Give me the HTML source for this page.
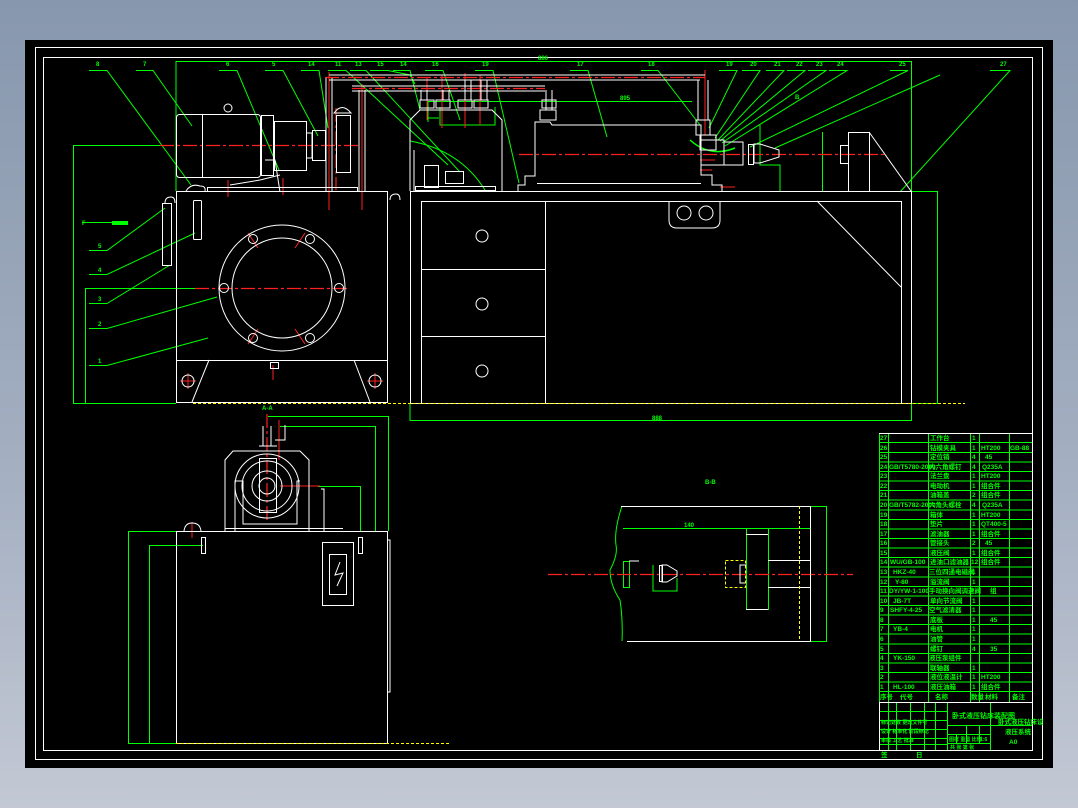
<!DOCTYPE html>
<html><head><meta charset="utf-8"><style>
html,body{margin:0;padding:0;width:1078px;height:808px;overflow:hidden;background:linear-gradient(180deg,#8797ad 0%,#a5b0c2 60%,#c3c8d4 100%);}
svg{position:absolute;left:0;top:0}
text{font-family:"Liberation Sans","Noto Sans CJK SC",sans-serif;font-weight:bold}
</style></head><body>
<svg width="1078" height="808" viewBox="0 0 1078 808" xmlns="http://www.w3.org/2000/svg">
<rect x="25" y="40" width="1028" height="728" fill="#000"/>
<g fill="none" stroke="#fff" stroke-width="1">
<rect x="35.5" y="47.5" width="1007" height="712"/>
<rect x="43.5" y="57.5" width="989" height="693"/>
</g>
<!-- dimension lines -->
<g fill="none" stroke="#00ff00" stroke-width="1">
<polyline points="176,191 176,61.5 911.5,61.5 911.5,420.5 410,420.5 410,403"/>
<polyline points="170,145.5 73.5,145.5 73.5,403.5 176,403.5"/>
<polyline points="201,288.5 85.5,288.5 85.5,403"/>
<polyline points="911,191.5 937.5,191.5 937.5,403.5 911,403.5"/>
<polyline points="822.5,132 822.5,191"/>
<polyline points="760,125 760,165 780,165 780,191"/>
<line x1="428" y1="101.5" x2="692" y2="101.5"/>
<line x1="428" y1="101" x2="428" y2="122"/>
<!-- leaders -->
<polyline points="89,70.5 107,70.5 191,185"/>
<polyline points="136,70.5 153,70.5 192,126"/>
<polyline points="219,70.5 237,70.5 279,170"/>
<polyline points="265,70.5 283,70.5 318,136"/>
<polyline points="301,70.5 319,70.5 328,128"/>
<polyline points="328,70.5 346,70.5 448,165"/>
<polyline points="350,70.5 366,70.5 460,172"/>
<polyline points="370,70.5 388,70.5 410,75 415,84"/>
<polyline points="393,70.5 410,70.5 420,110"/>
<polyline points="425,70.5 443,70.5 460,120"/>
<polyline points="475,70.5 493,70.5 519,183"/>
<polyline points="570,70.5 588,70.5 607,137"/>
<polyline points="641,70.5 658,70.5 700,125"/>
<polyline points="719,70.5 737,70.5 709,128"/>
<polyline points="742,70.5 760,70.5 715,138"/>
<polyline points="766,70.5 784,70.5 718,140"/>
<polyline points="787,70.5 805,70.5 720,141"/>
<polyline points="808,70.5 826,70.5 722,143"/>
<polyline points="829,70.5 847,70.5 725,146"/>
<polyline points="890,70.5 908,70.5 750,147"/>
<polyline points="940,75 775,148"/>
<polyline points="990,70.5 1010,70.5 900,192"/>
<polyline points="89,250.5 107,250.5 165,208"/>
<polyline points="89,274.5 107,274.5 195,233"/>
<polyline points="89,303.5 107,303.5 170,265"/>
<polyline points="89,328.5 107,328.5 217,297"/>
<polyline points="89,365.5 107,365.5 208,338"/>
<polyline points="82,222.5 128,222.5"/>
<path d="M410,141 Q460,150 485,190"/>
<polyline points="427,107 427,118 439,118"/>
<polyline points="440,107 440,125 495,125 495,107"/>
<path d="M690,140 Q710,158 735,148" stroke-width="1.5"/>
<!-- bottom-left dims -->
<polyline points="176,531.5 128.5,531.5 128.5,743.5 176,743.5"/>
<polyline points="203,545.5 149.5,545.5 149.5,743"/>
<polyline points="268,416.5 388.5,416.5 388.5,531"/>
<polyline points="280,426.5 375.5,426.5 375.5,531"/>
<polyline points="318,486.5 360.5,486.5 360.5,531"/>
<!-- B-B dims -->
<polyline points="623,528.5 810,528.5"/>
<polyline points="810,506.5 826.5,506.5 826.5,641.5 810,641.5"/>
<rect x="746.5" y="528.5" width="22" height="81"/>
<rect x="623.5" y="561.5" width="6" height="26"/>
<polyline points="653,565 653,591 677,591 677,578"/>
<path d="M622,506 Q614,530 616,545 Q618,555 610,570 Q610,585 620,600 Q623,620 622,641"/>
</g>
<g fill="#00ff00" font-size="6">
<text x="96" y="66">8</text><text x="143" y="66">7</text><text x="226" y="66">6</text><text x="272" y="66">5</text><text x="308" y="66">14</text><text x="335" y="66">11</text><text x="355" y="66">13</text><text x="377" y="66">15</text><text x="400" y="66">14</text><text x="432" y="66">16</text><text x="482" y="66">19</text><text x="577" y="66">17</text><text x="648" y="66">18</text><text x="726" y="66">19</text><text x="750" y="66">20</text><text x="774" y="66">21</text><text x="796" y="66">22</text><text x="816" y="66">23</text><text x="837" y="66">24</text><text x="899" y="66">25</text><text x="1000" y="66">27</text>
<text x="538" y="60">886</text><text x="620" y="100">895</text><text x="652" y="420">888</text>
<text x="98" y="248">5</text><text x="98" y="272">4</text><text x="98" y="301">3</text><text x="98" y="326">2</text><text x="98" y="363">1</text>
<text x="82" y="225">F</text><text x="795" y="99">B</text>
<text x="705" y="484">B-B</text><text x="262" y="410">A-A</text>
<text x="684" y="527">140</text>
<rect x="112" y="221" width="16" height="4"/>
</g>
<!-- red center lines -->
<g stroke="#ff2020" stroke-width="1.2" fill="none" stroke-dasharray="14,3,3,3">
<line x1="160" y1="145.5" x2="360" y2="145.5"/>
<line x1="195" y1="288.5" x2="350" y2="288.5"/>
<line x1="519" y1="154.5" x2="885" y2="154.5"/>
<line x1="548" y1="574.5" x2="853" y2="574.5"/>
<line x1="325" y1="77.5" x2="705" y2="77.5"/>
<line x1="352" y1="88.5" x2="545" y2="88.5"/>
<line x1="267" y1="414" x2="267" y2="520"/>
<line x1="336" y1="108" x2="336" y2="190"/>
</g>
<g stroke="#ff2020" stroke-width="1" fill="none">
<line x1="329" y1="72" x2="329" y2="210"/><line x1="362" y1="84" x2="362" y2="210"/>
<line x1="228" y1="180" x2="228" y2="197"/><line x1="283" y1="178" x2="283" y2="195"/>
<line x1="427" y1="78" x2="427" y2="120"/><line x1="442" y1="75" x2="442" y2="128"/><line x1="465" y1="73" x2="465" y2="128"/><line x1="480" y1="75" x2="480" y2="125"/>
<line x1="705" y1="70" x2="705" y2="135"/>
<path d="M180,381h16M188,373v16M367,381h16M375,373v16M273,365v15"/>
<path d="M248,233l10,15M305,233l-10,15M248,344l10,-15M305,344l-10,-15"/>
<line x1="280" y1="486" x2="320" y2="486"/><line x1="279" y1="420" x2="279" y2="460"/><line x1="192" y1="522" x2="192" y2="538"/>
<path d="M700,160l15,0M700,170l12,0M735,187l-15,0"/>
</g>
<!-- white geometry -->
<g fill="none" stroke="#fff" stroke-width="1">
<!-- motor/pump -->
<rect x="176.5" y="114.5" width="84" height="63" rx="3"/>
<line x1="202.5" y1="114" x2="202.5" y2="177"/>
<circle cx="228" cy="108" r="4"/>
<rect x="261.5" y="115.5" width="12" height="60"/>
<rect x="274.5" y="121.5" width="32" height="49"/>
<polyline points="306,133 312,133 312,158 306,158"/>
<rect x="312.5" y="130.5" width="13" height="30"/>
<rect x="336.5" y="115.5" width="14" height="57"/>
<path d="M334,113 Q342,102 351,113 Z"/>
<polyline points="265,160 275,160 280,192"/>
<path d="M230,185 L260,180 L280,175"/>
<path d="M186,191 Q191,183 200,186 Q206,186 205,191"/>
<rect x="207.5" y="187.5" width="150" height="4"/>
<!-- tank -->
<rect x="176.5" y="191.5" width="211" height="211"/>
<line x1="176" y1="360.5" x2="388" y2="360.5"/>
<line x1="209" y1="360" x2="192" y2="402"/><line x1="354" y1="360" x2="370" y2="402"/>
<circle cx="188" cy="381" r="6"/><circle cx="375" cy="381" r="6"/>
<circle cx="282" cy="288" r="63"/><circle cx="282" cy="288" r="50"/>
<circle cx="253" cy="239" r="4.5"/><circle cx="310" cy="239" r="4.5"/><circle cx="224" cy="288" r="4.5"/><circle cx="339" cy="288" r="4.5"/><circle cx="253" cy="338" r="4.5"/><circle cx="310" cy="338" r="4.5"/>
<rect x="193.5" y="200.5" width="8" height="39" rx="1"/>
<rect x="162.5" y="203.5" width="9" height="62"/>
<path d="M165,203 q0,-6 6,-6 q4,0 4,6M390,200 q0,-6 6,-6 q4,0 4,6"/>
<rect x="270.5" y="362.5" width="8" height="6"/>
<!-- pipes -->
<path d="M329,75 H705 M329,80 H700 M352,86 H545 M352,91 H545"/>
<path d="M326,78 V191 M332,78 V191 M359,90 V191 M365,90 V191"/>
<path d="M420,100 h14 v8 h-14z M436,100 h14 v8 h-14z M458,100 h14 v8 h-14z M474,100 h14 v8 h-14z M542,100 h14 v8 h-14z"/>
<path d="M421,90 v10 M427,90 v10 M443,90 v10 M449,90 v10 M465,80 v20 M471,80 v20 M481,80 v20 M487,80 v20 M546,90 v20 M552,90 v20"/>
<path d="M698,80 v40 M708,80 v40 M696,120 h14 v15 h-14z M700,135 h16 v15 h-16z"/>
<path d="M540,110 h16 v10 h-16z"/>
<!-- valve housing -->
<polyline points="410,191 410,120 420,110 492,110 502,120 502,191"/>
<line x1="414" y1="150" x2="414" y2="191"/>
<rect x="424.5" y="165.5" width="14" height="22"/>
<rect x="445.5" y="171.5" width="18" height="12"/>
<rect x="415.5" y="186.5" width="80" height="4"/>
<!-- cylinder -->
<polyline points="518,191 518,185 525,185 525,176 535,176 535,122 550,122 552,125 701,125 701,175 712,175 712,185 722,185 722,191"/>
<line x1="537" y1="183.5" x2="701" y2="183.5"/>
<polyline points="701,140 724,140 724,165 701,165"/>
<polyline points="724,142 743,142 743,165 724,165"/>
<rect x="748.5" y="144.5" width="5" height="20"/>
<polygon points="754,144 760,144 779,150 779,157 760,163 754,163"/>
<!-- tailstock -->
<rect x="848.5" y="132.5" width="21" height="59"/>
<rect x="840.5" y="145.5" width="8" height="18"/>
<line x1="869" y1="132" x2="911" y2="191"/>
<!-- bench -->
<rect x="410.5" y="191.5" width="501" height="212"/>
<polyline points="421.5,403 421.5,201.5 901.5,201.5 901.5,403"/>
<line x1="545.5" y1="201" x2="545.5" y2="403"/>
<line x1="421" y1="269.5" x2="545" y2="269.5"/><line x1="421" y1="336.5" x2="545" y2="336.5"/>
<circle cx="482" cy="236" r="6"/><circle cx="482" cy="304" r="6"/><circle cx="482" cy="371" r="6"/>
<path d="M669,201 V220 Q669,228 677,228 H712 Q720,228 720,220 V201"/>
<circle cx="684" cy="213" r="7"/><circle cx="706" cy="213" r="7"/>
<line x1="817" y1="201" x2="901" y2="287"/>
<!-- A view -->
<rect x="176.5" y="531.5" width="211" height="212"/>
<polyline points="225,531 225,460 233,451 300,451 309,460 309,531"/>
<circle cx="267" cy="486" r="32"/><circle cx="267" cy="486" r="25"/><circle cx="267" cy="486" r="15"/><circle cx="267" cy="486" r="8"/>
<rect x="259.5" y="458.5" width="17" height="54"/>
<polyline points="235,531 235,481 243,481 243,524 297,524 297,481 300,481"/>
<line x1="225" y1="528.5" x2="343" y2="528.5"/>
<polyline points="321,489 324,489 324,531"/>
<path d="M184,531 Q185,523 192,523 Q200,523 201,531"/>
<path d="M259,446 h18 M263,446 v-20 M271,446 v-20 M275,440 h10 v-15"/>
<rect x="201.5" y="537.5" width="4" height="16"/><rect x="358.5" y="537.5" width="4" height="16"/>
<rect x="322.5" y="542.5" width="31" height="63"/><rect x="329.5" y="554.5" width="17" height="40"/>
<polyline points="340,562 335,575 343,573 337,586"/>
<polyline points="388,540 390,540 390,692 388,692"/>
<!-- B-B -->
<polyline points="621,506.5 810.5,506.5 810.5,641.5 627,641.5"/>
<line x1="746" y1="534.5" x2="768" y2="534.5"/>
<line x1="746" y1="609.5" x2="768" y2="609.5"/>
<polyline points="768,560.5 810,560.5 M768,587.5 810,587.5"/>
<line x1="768" y1="560.5" x2="810" y2="560.5"/><line x1="768" y1="587.5" x2="810" y2="587.5"/>
<polyline points="629,561 639,561 M640,562 652,562 652,586 640,586 M629,586 639,586"/>
<rect x="659.5" y="565.5" width="3" height="16"/>
<polygon points="662,565 667,565 677,571 677,576 667,582 662,582"/>
<polyline points="746,565 740,565 740,583 746,583"/>
</g>
<g fill="none" stroke="#ffff00" stroke-width="1" stroke-dasharray="3,2">
<line x1="193" y1="403.5" x2="965" y2="403.5"/>
<line x1="176" y1="743.5" x2="450" y2="743.5"/>
<line x1="799.5" y1="506" x2="799.5" y2="641"/>
<rect x="725.5" y="560.5" width="20" height="27"/>
</g>
<line x1="43" y1="750.5" x2="1032" y2="750.5" stroke="#fff"/>
<!-- title block -->
<g stroke="#00ff00" stroke-width="1" fill="none">
<path d="M879.5,433 V750 M888.5,433 V702 M928.5,433 V702 M970.5,433 V702 M979.5,433 V702 M1009.5,433 V702"/>
<path d="M879,442.5H1032M879,452.5H1032M879,462H1032M879,471.5H1032M879,481H1032M879,490.5H1032M879,500H1032M879,510H1032M879,519.5H1032M879,529H1032M879,538.5H1032M879,548H1032M879,557.5H1032M879,567H1032M879,577H1032M879,586.5H1032M879,596H1032M879,605.5H1032M879,615H1032M879,624.5H1032M879,634H1032M879,644H1032M879,653.5H1032M879,663H1032M879,672.5H1032M879,682H1032M879,691.5H1032"/>
<path d="M888.5,702 V750 M896.5,702V750 M910.5,702V750 M924.5,702V750 M935.5,702V750 M947.5,702V750 M990.5,702V750 M879,711.5H947 M879,720.5H947 M879,729.5H947 M879,738.5H947 M879,744.5H947 M947,725.5H1032 M947,734.5H990 M947,743.5H990 M956.5,734V743 M966.5,725V743 M979.5,725V743"/>
</g>
<g stroke="#fff" fill="none"><path d="M879,433.5H1032 M879,702.5H1032 M1032.5,433V750 M879.5,702V750"/></g>
<g fill="#00ff00" font-size="6.5">
<text x="880" y="440">27</text><text x="930" y="440">工作台</text><text x="972" y="440">1</text>
<text x="880" y="450">26</text><text x="930" y="450">钻模夹具</text><text x="972" y="450">1</text><text x="981" y="450">HT200</text><text x="1010" y="450">GB-88</text>
<text x="880" y="459">25</text><text x="930" y="459">定位销</text><text x="972" y="459">4</text><text x="985" y="459">45</text>
<text x="880" y="469">24</text><text x="889" y="469">GB/T5780-2000</text><text x="929" y="469">内六角螺钉</text><text x="972" y="469">4</text><text x="982" y="469">Q235A</text>
<text x="880" y="478">23</text><text x="930" y="478">法兰盘</text><text x="972" y="478">1</text><text x="981" y="478">HT200</text>
<text x="880" y="488">22</text><text x="930" y="488">电动机</text><text x="972" y="488">1</text><text x="981" y="488">组合件</text>
<text x="880" y="497">21</text><text x="930" y="497">油箱盖</text><text x="972" y="497">2</text><text x="981" y="497">组合件</text>
<text x="880" y="507">20</text><text x="889" y="507">GB/T5782-2000</text><text x="929" y="507">六角头螺栓</text><text x="972" y="507">4</text><text x="982" y="507">Q235A</text>
<text x="880" y="517">19</text><text x="930" y="517">箱体</text><text x="972" y="517">1</text><text x="981" y="517">HT200</text>
<text x="880" y="526">18</text><text x="930" y="526">垫片</text><text x="972" y="526">1</text><text x="981" y="526">QT400-5</text>
<text x="880" y="536">17</text><text x="930" y="536">滤油器</text><text x="972" y="536">1</text><text x="981" y="536">组合件</text>
<text x="880" y="545">16</text><text x="930" y="545">管接头</text><text x="972" y="545">2</text><text x="985" y="545">45</text>
<text x="880" y="555">15</text><text x="930" y="555">液压阀</text><text x="972" y="555">1</text><text x="981" y="555">组合件</text>
<text x="880" y="564">14</text><text x="890" y="564">WU/GB-100</text><text x="930" y="564">进油口滤油器</text><text x="971" y="564">12</text><text x="981" y="564">组合件</text>
<text x="880" y="574">13</text><text x="893" y="574">HKZ-40</text><text x="929" y="574">三位四通电磁阀</text><text x="972" y="574">1</text>
<text x="880" y="584">12</text><text x="895" y="584">Y-80</text><text x="930" y="584">溢流阀</text><text x="972" y="584">1</text>
<text x="880" y="593">11</text><text x="889" y="593">DY/YW-1-100</text><text x="929" y="593">手动换向阀调速阀</text><text x="990" y="593">组</text>
<text x="880" y="603">10</text><text x="893" y="603">JB-7T</text><text x="930" y="603">单向节流阀</text><text x="972" y="603">1</text>
<text x="880" y="612">9</text><text x="890" y="612">SHFY-4-25</text><text x="929" y="612">空气滤清器</text><text x="972" y="612">1</text>
<text x="880" y="622">8</text><text x="930" y="622">底板</text><text x="972" y="622">1</text><text x="990" y="622">45</text>
<text x="880" y="631">7</text><text x="893" y="631">YB-4</text><text x="930" y="631">电机</text><text x="972" y="631">1</text>
<text x="880" y="641">6</text><text x="930" y="641">油管</text><text x="972" y="641">1</text>
<text x="880" y="651">5</text><text x="930" y="651">螺钉</text><text x="972" y="651">4</text><text x="990" y="651">35</text>
<text x="880" y="660">4</text><text x="893" y="660">YK-150</text><text x="929" y="660">液压泵组件</text>
<text x="880" y="670">3</text><text x="930" y="670">联轴器</text><text x="972" y="670">1</text>
<text x="880" y="679">2</text><text x="930" y="679">液位液温计</text><text x="972" y="679">1</text><text x="981" y="679">HT200</text>
<text x="880" y="689">1</text><text x="893" y="689">HL-100</text><text x="930" y="689">液压油箱</text><text x="972" y="689">1</text><text x="981" y="689">组合件</text>
<text x="880" y="699">序号</text><text x="900" y="699">代号</text><text x="935" y="699">名称</text><text x="971" y="699">数量</text><text x="985" y="699">材料</text><text x="1012" y="699">备注</text>
<text x="952" y="718" font-size="7">卧式液压钻床装配图</text>
<text x="998" y="724">卧式液压钻床设</text><text x="1005" y="734">液压系统</text><text x="1009" y="744">A0</text>
<text x="881" y="724" font-size="5">标记处数 更改文件号</text><text x="881" y="733" font-size="5">设计 标准化 阶段标记</text>
<text x="881" y="742" font-size="5">审核 工艺 批准</text>
<text x="949" y="741" font-size="5">图样 重量 比例</text><text x="980" y="741" font-size="5">1:6</text>
<text x="950" y="749" font-size="5">共 张 第 张</text>
<text x="881" y="757">签</text><text x="916" y="757">日</text>
</g>
</svg>
</body></html>
